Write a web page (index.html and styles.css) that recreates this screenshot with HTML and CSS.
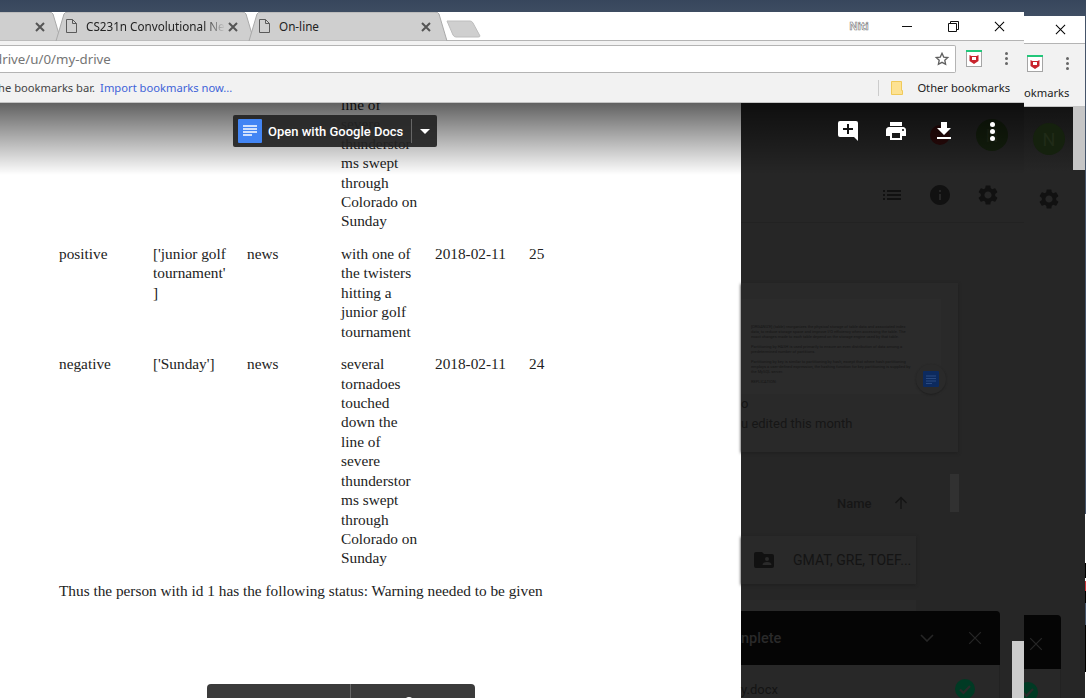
FILE: index.html
```html
<!DOCTYPE html>
<html>
<head>
    <meta charset="utf-8">
    <title>On-line</title>
    <link rel="stylesheet" href="styles.css">
</head>
<body>

<svg class="defs" width="0" height="0">
  <symbol id="i-print" viewBox="0 0 24 24"><path d="M19 8H5c-1.66 0-3 1.34-3 3v6h4v4h12v-4h4v-6c0-1.66-1.34-3-3-3zm-3 11H8v-5h8v5zm3-7c-.55 0-1-.45-1-1s.45-1 1-1 1 .45 1 1-.45 1-1 1zm-1-9H6v4h12V3z"/></symbol>
  <symbol id="i-download" viewBox="0 0 24 24"><path d="M19 9h-4V3H9v6H5l7 7 7-7zM5 18v2h14v-2H5z"/></symbol>
  <symbol id="i-list" viewBox="0 0 24 24"><path d="M3 13h2v-2H3v2zm0 4h2v-2H3v2zm0-8h2V7H3v2zm4 4h14v-2H7v2zm0 4h14v-2H7v2zM7 7v2h14V7H7z"/></symbol>
  <symbol id="i-info" viewBox="0 0 24 24"><path d="M12 2C6.48 2 2 6.48 2 12s4.48 10 10 10 10-4.48 10-10S17.52 2 12 2zm1 15h-2v-6h2v6zm0-8h-2V7h2v2z"/></symbol>
  <symbol id="i-gear" viewBox="0 0 24 24"><path d="M19.14 12.94c.04-.3.06-.61.06-.94 0-.32-.02-.64-.07-.94l2.03-1.58a.49.49 0 0 0 .12-.61l-1.92-3.32a.488.488 0 0 0-.59-.22l-2.39.96c-.5-.38-1.03-.7-1.62-.94l-.36-2.54a.484.484 0 0 0-.48-.41h-3.84c-.24 0-.43.17-.47.41l-.36 2.54c-.59.24-1.13.57-1.62.94l-2.39-.96c-.22-.08-.47 0-.59.22L2.74 8.87c-.12.21-.08.47.12.61l2.03 1.58c-.05.3-.09.63-.09.94s.02.64.07.94l-2.03 1.58a.49.49 0 0 0-.12.61l1.92 3.32c.12.22.37.29.59.22l2.39-.96c.5.38 1.03.7 1.62.94l.36 2.54c.05.24.24.41.48.41h3.84c.24 0 .44-.17.47-.41l.36-2.54c.59-.24 1.13-.56 1.62-.94l2.39.96c.22.08.47 0 .59-.22l1.92-3.32c.12-.22.07-.47-.12-.61l-2.01-1.58zM12 15.6c-1.98 0-3.6-1.62-3.6-3.6s1.62-3.6 3.6-3.6 3.6 1.62 3.6 3.6-1.62 3.6-3.6 3.6z"/></symbol>
  <symbol id="i-close" viewBox="0 0 12 12"><path d="M1 1l10 10M11 1L1 11" fill="none" stroke="currentColor" stroke-width="1.1"/></symbol>
  <symbol id="i-tabx" viewBox="0 0 10 10"><path d="M1 1l8 8M9 1L1 9" fill="none" stroke="currentColor" stroke-width="2"/></symbol>
  <symbol id="i-page" viewBox="0 0 11 14"><path d="M.5.5h6l4 4v9H.5zM6.500.5v4h4" fill="none" stroke="#5a5a5a"/></symbol>
  <symbol id="i-shield" viewBox="0 0 16 17">
    <rect x=".5" y=".5" width="15" height="16" fill="#fff" stroke="#a5a5a5"/>
    <rect width="16" height="2" fill="#22c77a"/>
    <path d="M3.500 5l2 1h5l2-1v6l-4.500 3-4.500-3z" fill="#c8232c"/>
    <rect x="6" y="7" width="4" height="3" fill="#fff"/>
  </symbol>
  <symbol id="i-check" viewBox="0 0 20 20"><circle cx="10" cy="10" r="10" fill="#003a24"/><path d="M5 10.500l3.500 3.500L15 7" fill="none" stroke="#2b2b2b" stroke-width="2.200"/></symbol>
</svg>

<div class="edge">
  <i class="edge-slate edge-a"></i>
  <i class="edge-white edge-b"></i>
  <i class="edge-black edge-c"></i>
  <i class="edge-white edge-d"></i>
  <i class="edge-red edge-e"></i>
  <i class="edge-black edge-f"></i>
  <i class="edge-slate edge-g"></i>
  <i class="edge-black edge-h"></i>
  <i class="edge-white edge-i"></i>
</div>

<!-- window behind, only its right end shows -->
<div class="win win-back">
  <div class="back-title">
    <svg class="win-x"><use href="#i-close"/></svg>
  </div>
  <div class="back-bars">
    <div class="back-tools">
      <svg class="ext"><use href="#i-shield"/></svg>
      <span class="dots"><i></i><i></i><i></i></span>
    </div>
    <div class="back-marks">okmarks</div>
  </div>
  <div class="back-page">
    <div class="back-top">
      <span class="avatar">N</span>
      <span class="back-thumb"></span>
    </div>
    <div class="back-gear"><svg class="ico-dim"><use href="#i-gear"/></svg></div>
    <div class="back-toast">
      <div class="back-toast-head"><svg class="toast-x"><use href="#i-close"/></svg></div>
      <div class="back-toast-row"><svg class="check"><use href="#i-check"/></svg></div>
    </div>
  </div>
</div>

<!-- main window -->
<div class="win win-front">
  <div class="tabstrip">
    <div class="tabs">
      <div class="tab tab-cut">
        <svg class="tab-bg" viewBox="0 0 200 29"><path d="M1 29L9 2q1-2 4-2h174q3 0 4 2l8 27z"/></svg>
        <svg class="tab-x"><use href="#i-tabx"/></svg>
      </div>
      <div class="tab">
        <svg class="tab-bg" viewBox="0 0 200 29"><path d="M1 29L9 2q1-2 4-2h174q3 0 4 2l8 27z"/></svg>
        <svg class="tab-ico"><use href="#i-page"/></svg>
        <span class="tab-title fade">CS231n Convolutional Ne</span>
        <svg class="tab-x"><use href="#i-tabx"/></svg>
      </div>
      <div class="tab">
        <svg class="tab-bg" viewBox="0 0 200 29"><path d="M1 29L9 2q1-2 4-2h174q3 0 4 2l8 27z"/></svg>
        <svg class="tab-ico"><use href="#i-page"/></svg>
        <span class="tab-title">On-line</span>
        <svg class="tab-x"><use href="#i-tabx"/></svg>
      </div>
      <svg class="newtab" viewBox="0 0 35 18"><path d="M1 1h23q2 0 3 2l7 13q0 1-2 1H10q-2 0-3-2z"/></svg>
    </div>
    <div class="winbtns">
      <span class="badge">Niti</span>
      <span class="wbtn"><i class="w-min"></i></span>
      <span class="wbtn"><svg class="w-svg" viewBox="0 0 11 11"><path d="M.5 2.500h8v8h-8zM2.500 2.500v-2h8v8h-2" fill="none" stroke="#111"/></svg></span>
      <span class="wbtn"><svg class="win-x"><use href="#i-close"/></svg></span>
    </div>
  </div>

  <div class="toolbar">
    <div class="omnibox">
      <span class="url">drive/u/0/my-drive</span>
      <svg class="star" viewBox="0 0 24 24"><path d="M12 3.500l2.600 5.600 6.100.7-4.500 4.200 1.200 6L12 17l-5.400 3 1.200-6-4.500-4.200 6.100-.7z" fill="none" stroke="#5f5f5f" stroke-width="2"/></svg>
    </div>
    <svg class="ext"><use href="#i-shield"/></svg>
    <span class="dots"><i></i><i></i><i></i></span>
  </div>

  <div class="bookmarks">
    <span class="bm-msg">he bookmarks bar.</span>
    <span class="bm-link">Import bookmarks now...</span>
    <span class="bm-sep"></span>
    <svg class="bm-folder" viewBox="0 0 12 14"><path d="M.5.500h10v9h1v4H.5z" fill="#fde293" stroke="#f0ca5a"/></svg>
    <span class="bm-other">Other bookmarks</span>
  </div>

  <div class="viewport">
    <div class="doc">
      <table class="doc-table">
        <tr>
          <td></td><td></td><td></td>
          <td>line of<br>severe<br>thunderstor<br>ms swept<br>through<br>Colorado on<br>Sunday</td>
          <td></td><td></td>
        </tr>
        <tr>
          <td>positive</td>
          <td>['junior golf<br>tournament'<br>]</td>
          <td>news</td>
          <td>with one of<br>the twisters<br>hitting a<br>junior golf<br>tournament</td>
          <td>2018-02-11</td>
          <td>25</td>
        </tr>
        <tr>
          <td>negative</td>
          <td>['Sunday']</td>
          <td>news</td>
          <td>several<br>tornadoes<br>touched<br>down the<br>line of<br>severe<br>thunderstor<br>ms swept<br>through<br>Colorado on<br>Sunday</td>
          <td>2018-02-11</td>
          <td>24</td>
        </tr>
      </table>
      <p class="doc-end">Thus the person with id 1 has the following status: Warning needed to be given</p>
    </div>

    <div class="drive">
      <div class="drive-top">
        <span class="red-dot"></span>
        <span class="avatar">N</span>
      </div>
      <div class="drive-actions">
        <svg class="ico-dim"><use href="#i-list"/></svg>
        <svg class="ico-dim"><use href="#i-info"/></svg>
        <svg class="ico-dim"><use href="#i-gear"/></svg>
      </div>
      <div class="card">
        <div class="card-page">
          <p>[ORGANIZE] (table) reorganizes the physical storage of table data and associated index data, to reduce storage space and improve I/O efficiency when accessing the table. The exact changes made to each table depend on the storage engine used by that table.</p>
          <p>Partitioning by HASH is used primarily to ensure an even distribution of data among a predetermined number of partitions.</p>
          <p>Partitioning by key is similar to partitioning by hash, except that where hash partitioning employs a user-defined expression, the hashing function for key partitioning is supplied by the MySQL server.</p>
          <p>REPLICATION:</p>
          <span class="doc-chip">
            <svg viewBox="0 0 16 16"><rect width="16" height="16" rx="1" fill="#0c2a5e"/><path d="M3 5h10M3 7.500h10M3 10h10M3 12.500h6" stroke="#2a4a80"/></svg>
          </span>
        </div>
        <div class="card-name">o</div>
        <div class="card-sub">u edited this month</div>
      </div>
      <div class="sort-row">
        <span class="sort-name">Name</span>
        <svg class="sort-arrow" viewBox="0 0 14 14"><path d="M7 13V1.500M1.500 7L7 1.500 12.500 7" fill="none" stroke="#141414" stroke-width="1.400"/></svg>
      </div>
      <div class="folder">
        <svg class="folder-ico" viewBox="0 0 20 16"><path d="M2 0h6l2 2h8a2 2 0 0 1 2 2v10a2 2 0 0 1-2 2H2a2 2 0 0 1-2-2V2a2 2 0 0 1 2-2z" fill="#111"/><circle cx="13" cy="7" r="2" fill="#2a2a2a"/><path d="M8.500 13q0-3 4.500-3t4.500 3z" fill="#2a2a2a"/></svg>
        <span>GMAT, GRE, TOEF...</span>
      </div>
      <div class="folder-next"></div>
      <span class="name-scroll"></span>
      <div class="toast">
        <div class="toast-head">
          <span>nplete</span>
          <svg class="toast-down" viewBox="0 0 14 8"><path d="M1 1l6 6 6-6" fill="none" stroke="#262626" stroke-width="1.600"/></svg>
          <svg class="toast-x"><use href="#i-close"/></svg>
        </div>
        <div class="toast-row">
          <span>y.docx</span>
          <svg class="check"><use href="#i-check"/></svg>
        </div>
      </div>
      <span class="page-thumb"></span>
    </div>

    <div class="shade"></div>

    <div class="open-with">
      <span class="docs-ico">
        <svg viewBox="0 0 24 24"><path d="M5 7h14M5 10h14M5 13h14M5 16h9" stroke="#fff" stroke-width="1.500"/></svg>
      </span>
      <span class="open-label">Open with Google Docs</span>
      <span class="open-sep"></span>
      <span class="open-caret"></span>
    </div>

    <div class="viewer-icons">
      <svg class="ico-white" viewBox="0 0 24 24"><path d="M2 4a2 2 0 0 1 2-2h16a2 2 0 0 1 2 2v18l-4-4H4a2 2 0 0 1-2-2z" fill="#fff"/><path d="M7 10h10M12 5v10" stroke="#111" stroke-width="2"/></svg>
      <span class="print-wrap">
        <svg class="ico-white"><use href="#i-print"/></svg>
      </span>
      <svg class="ico-white"><use href="#i-download"/></svg>
      <span class="dots dots-white"><i></i><i></i><i></i></span>
    </div>

    <div class="page-bar">
      <span class="page-bar-cell"></span>
      <span class="page-bar-cell page-bar-zoom"><i></i></span>
    </div>
  </div>
</div>

</body>
</html>
```

FILE: styles.css
```css
* {box-sizing: border-box}

html, body {
  margin: 0;
  height: 100%;
}

body {
  position: relative;
  width: 1086px;
  height: 698px;
  overflow: hidden;
  background: linear-gradient(#37465c, #46556a 30px);
  font-family: "Noto Sans", Arial, sans-serif;
}

.defs {
  position: absolute;
}

svg {
  display: block;
}

/* windows on the desktop */
.win {
  position: absolute;
  display: flex;
  flex-direction: column;
  overflow: hidden;
}

.win-front {
  left: 0;
  top: 12px;
  width: 1024px;
  height: 686px;
  background: #fff;
}

.win-back {
  left: 1024px;
  top: 16px;
  width: 61px;
  height: 682px;
  background: #262626;
}

/* strip of other windows on the far right */
.edge {
  position: absolute;
  right: 0;
  top: 170px;
  width: 1px;
  height: 528px;
  display: flex;
  flex-direction: column;
}

.edge i {display: block}
.edge-slate {background: #46556a}
.edge-white {background: #fff}
.edge-black {background: #000}
.edge-red {background: #c9363c}
.edge-a {height: 344px}
.edge-b {height: 49px}
.edge-c {height: 15px}
.edge-d {height: 3px}
.edge-e {height: 10px}
.edge-f {height: 12px}
.edge-g {height: 22px}
.edge-h {height: 47px}
.edge-i {height: 26px}

/* back window */
.back-title {
  height: 28px;
  background: #fff;
  border-bottom: 1px solid #b4b4b4;
  position: relative;
}

.back-title .win-x {
  position: absolute;
  left: 31px;
  top: 8px;
}

.back-bars {
  height: 63px;
  background: #f2f2f2;
  border-bottom: 1px solid #c4c4c4;
}

.back-tools {
  display: flex;
  align-items: center;
  height: 38px;
  padding-left: 3px;
  padding-top: 1px;
}

.back-tools .ext {
  margin-left: 0;
}

.back-tools .dots {
  margin-left: 23px;
}

.back-marks {
  font-size: 11.200px;
  line-height: 16px;
  color: #222;
  padding-top: 3px;
}

.back-page {
  flex: 1;
  position: relative;
  background: #262626;
}

.back-top {
  height: 64px;
  position: relative;
  display: flex;
  background: linear-gradient(#131313, #262626);
}

.back-top .avatar {
  margin-left: 9px;
  margin-top: 16px;
}

.back-thumb {
  position: absolute;
  right: -1px;
  top: 0;
  width: 13px;
  height: 63px;
  background: #c6c6c6;
}

.back-gear {
  padding: 16px 0 0 13px;
}

.back-toast {
  position: absolute;
  left: 0;
  top: 508px;
  width: 37px;
}

.back-toast-head {
  height: 54px;
  background: #050505;
  border-top-right-radius: 4px;
  padding: 22px 0 0 5px;
}

.back-toast-row {
  height: 40px;
  background: #282828;
  overflow: hidden;
  padding: 13px 0 0 0;
  border-right: 1px solid #222;
}

.back-toast-row .check {
  margin-left: -6px;
}

/* tab strip */
.tabstrip {
  display: flex;
  justify-content: space-between;
  height: 29px;
  border-bottom: 1px solid #b4b4b4;
  position: relative;
}

.tabs {
  display: flex;
  height: 29px;
  margin-left: -138px;
}

.tab {
  position: relative;
  display: flex;
  align-items: center;
  flex: none;
  width: 200px;
  height: 29px;
  margin-right: -7px;
  padding: 0 0 2px 11px;
  font-size: 11.700px;
  color: #222;
}

.tab-bg {
  position: absolute;
  left: 0;
  top: 0;
  width: 200px;
  height: 29px;
}

.tab-bg path {
  fill: #cfcfcf;
  stroke: #a9a9a9;
}

.tab-ico {
  position: relative;
  width: 11px;
  height: 14px;
  margin-right: 9px;
}

.tab-title {
  position: relative;
  white-space: nowrap;
}

.fade {
  -webkit-mask-image: linear-gradient(to right, #000 85%, transparent);
  mask-image: linear-gradient(to right, #000 85%, transparent);
}

.tab-x {
  position: absolute;
  left: 173px;
  top: 10px;
  width: 10px;
  height: 10px;
  color: #555;
}

.newtab {
  flex: none;
  width: 35px;
  height: 18px;
  margin: 8px 0 0 5px;
}

.newtab path {
  fill: #cfcfcf;
  stroke: #bdbdbd;
}

.winbtns {
  display: flex;
  align-items: center;
  height: 28px;
  padding-right: 2px;
}

.badge {
  font-size: 10.500px;
  font-weight: bold;
  color: #fff;
  width: 20px;
  margin-right: 15px;
  text-align: center;
  -webkit-text-stroke: .6px #777;
}

.wbtn {
  display: flex;
  align-items: center;
  justify-content: center;
  width: 46px;
  height: 28px;
}

.w-min {
  display: block;
  width: 10px;
  border-top: 1px solid #111;
}

.w-svg {
  width: 11px;
  height: 11px;
}

.win-x {
  width: 11px;
  height: 11px;
  color: #000;
}

/* toolbar */
.toolbar {
  display: flex;
  align-items: center;
  height: 32px;
  background: #f2f2f2;
  padding-top: 3px;
}

.omnibox {
  display: flex;
  align-items: center;
  justify-content: space-between;
  width: 956px;
  height: 28px;
  background: #fff;
  border: 1px solid #b4b4b4;
  border-left: none;
  border-radius: 0 2px 2px 0;
  overflow: hidden;
  padding-right: 5px;
}

.url {
  font-size: 13.300px;
  color: #757575;
  margin-left: -6px;
}

.star {
  width: 16px;
  height: 16px;
}

.ext {
  width: 16px;
  height: 17px;
  margin-left: 10px;
}

.dots {
  display: flex;
  flex-direction: column;
  gap: 2px;
  width: 4px;
  margin-left: 23px;
}

.dots i {
  display: block;
  width: 3px;
  height: 3px;
  border-radius: 50%;
  background: #666;
}

/* bookmarks */
.bookmarks {
  display: flex;
  align-items: center;
  height: 30px;
  padding-right: 14px;
  background: #f2f2f2;
  border-bottom: 1px solid #c4c4c4;
  font-size: 11.200px;
  color: #444;
  white-space: nowrap;
}

.bm-msg {
  margin-left: -2px;
}

.bm-link {
  color: #3e63d8;
  margin-left: 5px;
}

.bm-sep {
  width: 1px;
  height: 16px;
  background: #ccc;
  margin-left: auto;
}

.bm-folder {
  width: 12px;
  height: 14px;
  margin-left: 12px;
}

.bm-other {
  margin-left: 14px;
  color: #222;
}

/* viewer area */
.viewport {
  position: relative;
  flex: 1;
  display: flex;
  overflow: hidden;
}

.doc {
  width: 741px;
  background: #fff;
  padding-left: 59px;
  font-family: "Liberation Serif", serif;
  font-size: 15.300px;
  line-height: 19.400px;
  color: #222;
}

.doc-table {
  border-collapse: collapse;
  table-layout: fixed;
  width: 564px;
  margin-top: -8px;
}

.doc-table td {
  width: 94px;
  padding: 0 0 13.200px;
  vertical-align: top;
  white-space: nowrap;
}

.doc-end {
  margin: 0;
  white-space: nowrap;
}

.drive {
  position: relative;
  flex: 1;
  background: #262626;
  font-family: Roboto, sans-serif;
  color: #141414;
}

.drive-top {
  display: flex;
  justify-content: flex-end;
  height: 64px;
  padding: 16px 16px 0 0;
}

.red-dot {
  width: 20px;
  height: 20px;
  border-radius: 50%;
  background: #2c0a0a;
  margin: 6px 26px 0 0;
}

.avatar {
  display: flex;
  align-items: center;
  justify-content: center;
  width: 32px;
  height: 32px;
  border-radius: 50%;
  background: #15210e;
  color: #202b18;
  font-family: Roboto, sans-serif;
  font-size: 18px;
}

.drive-actions {
  display: flex;
  justify-content: flex-end;
  gap: 24px;
  height: 56px;
  padding: 16px 24px 0 0;
  border-bottom: 1px solid #222;
}

.ico-dim {
  width: 24px;
  height: 24px;
  fill: #111;
}

.ico-white {
  width: 24px;
  height: 24px;
  fill: #fff;
}

/* preview card */
.card {
  width: 217px;
  height: 169px;
  margin-top: 60px;
  background: #292929;
  box-shadow: 0 1px 3px #1f1f1f;
  padding-top: 16px;
  font-size: 13px;
  line-height: 20px;
}

.card-page {
  position: relative;
  width: 200px;
  height: 95px;
  background: #2b2b2b;
  padding: 25px 26px 0 10px;
  font-size: 4px;
  line-height: 5px;
  color: #161616;
}

.card-page p {
  margin: 0 0 5px;
}

.doc-chip {
  position: absolute;
  left: 175px;
  top: 65px;
  display: flex;
  align-items: center;
  justify-content: center;
  width: 30px;
  height: 30px;
  border-radius: 50%;
  background: #2a2a2a;
  box-shadow: 0 1px 2px #1f1f1f;
}

.doc-chip svg {
  width: 16px;
  height: 16px;
}

.card-name {
  height: 20px;
  margin-top: 0;
}

.card-sub {
  color: #161616;
}

.sort-row {
  display: flex;
  align-items: center;
  height: 24px;
  margin-top: 39px;
  padding-left: 96px;
  font-size: 13px;
  font-weight: 500;
  color: #161616;
}

.sort-arrow {
  width: 14px;
  height: 14px;
  margin-left: 22px;
}

.folder {
  display: flex;
  align-items: center;
  width: 175px;
  height: 48px;
  margin-top: 21px;
  background: #292929;
  box-shadow: 0 1px 3px #1f1f1f;
  padding-left: 13px;
  font-size: 14px;
  white-space: nowrap;
}

.folder-ico {
  width: 20px;
  height: 16px;
  margin-right: 19px;
}

.folder-next {
  width: 175px;
  height: 48px;
  margin-top: 16px;
  background: #292929;
}

.name-scroll {
  position: absolute;
  left: 209px;
  top: 371px;
  width: 9px;
  height: 38px;
  background: #313131;
}

/* finished downloads panel */
.toast {
  position: absolute;
  left: 0;
  top: 508px;
  width: 259px;
}

.toast-head {
  display: flex;
  align-items: center;
  height: 54px;
  background: #050505;
  border-top-right-radius: 4px;
  font-size: 14.500px;
  font-weight: 500;
  color: #2a2a2a;
}

.toast-head span {
  flex: 1;
}

.toast-down {
  width: 14px;
  height: 8px;
  margin-right: 34px;
}

.toast-x {
  width: 14px;
  height: 14px;
  color: #262626;
  margin-right: 18px;
}

.toast-row {
  display: flex;
  align-items: center;
  justify-content: space-between;
  height: 48px;
  background: #282828;
  border-right: 1px solid #222;
  padding: 0 24px 0 0;
  font-size: 13px;
  color: #141414;
}

.check {
  width: 20px;
  height: 20px;
}

.page-thumb {
  position: absolute;
  right: 0;
  top: 538px;
  width: 12px;
  height: 60px;
  background: #cbcbcb;
}

/* things over the document */
.shade {
  position: absolute;
  left: 0;
  right: 0;
  top: 0;
  height: 72px;
  background: linear-gradient(rgba(0,0,0,.62), rgba(0,0,0,0));
}

.open-with {
  position: absolute;
  left: 233px;
  top: 12px;
  display: flex;
  align-items: center;
  width: 204px;
  height: 32px;
  padding-left: 5px;
  background: rgba(36,36,36,.93);
  border-radius: 2px;
  font-family: Roboto, sans-serif;
  font-size: 13px;
  font-weight: 500;
  color: #fff;
}

.docs-ico {
  width: 24px;
  height: 24px;
  border-radius: 1px;
  background: #4285f4;
}

.open-label {
  margin-left: 6px;
  white-space: nowrap;
}

.open-sep {
  width: 1px;
  height: 24px;
  background: #666;
  margin-left: 8px;
}

.open-caret {
  width: 0;
  height: 0;
  margin-left: 8px;
  border-left: 5px solid transparent;
  border-right: 5px solid transparent;
  border-top: 5px solid #fff;
}

.viewer-icons {
  position: absolute;
  left: 836px;
  top: 16px;
  display: flex;
  gap: 24px;
}

.print-wrap {
  position: relative;
}

.print-wrap::after {
  content: "";
  position: absolute;
  left: -2px;
  top: 18px;
  width: 18px;
  height: 5px;
  background: repeating-linear-gradient(to right, #000 0 3px, transparent 3px 5px);
  z-index: -1;
}

.dots-white {
  gap: 2px;
  width: 5px;
  margin-left: 10px;
  padding-top: 3px;
}

.dots-white i {
  width: 5px;
  height: 5px;
  background: #fff;
}

.page-bar {
  position: absolute;
  left: 207px;
  top: 581px;
  display: flex;
  width: 268px;
  height: 40px;
  background: #3b3b3b;
  border-radius: 4px;
}

.page-bar-cell {
  width: 144px;
  border-right: 1px solid #666;
}

.page-bar-zoom {
  flex: 1;
  border: none;
  padding: 13px 0 0 53px;
}

.page-bar-zoom i {
  display: block;
  width: 10px;
  height: 10px;
  border-radius: 50%;
  background: #fff;
}
```
